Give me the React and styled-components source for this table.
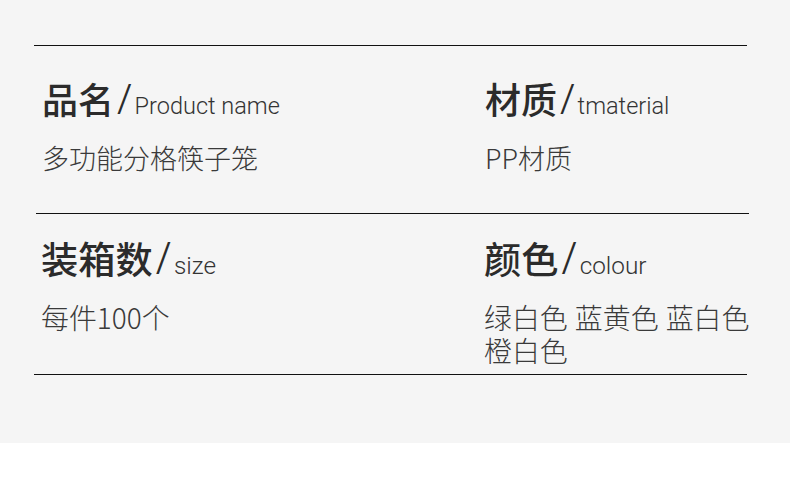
import styled, { createGlobalStyle } from "styled-components";

const GlobalStyle = createGlobalStyle`
  body {
    margin: 0;
    background: #ffffff;
    font-family: "Noto Sans CJK SC", "Noto Sans", sans-serif;
    color: #333333;
  }
`;

const SPECS = [
  {
    top: 32,
    shift: 0,
    scale: 1,
    items: [
      { cn: "品名", en: "Product name", value: [["多功能分格筷子笼"]] },
      { cn: "材质", en: "tmaterial", value: [["PP材质"]] },
    ],
  },
  {
    top: 25,
    shift: 2,
    scale: 1.035,
    items: [
      { cn: "装箱数", en: "size", value: [["每件100个"]] },
      { cn: "颜色", en: "colour", value: [["绿白色", "蓝黄色", "蓝白色"], ["橙白色"]] },
    ],
  },
];

function App() {
  return (
    <>
      <GlobalStyle />
      <Panel>
        {SPECS.map((row, i) => (
          <Section key={i} $top={row.top} $shift={row.shift}>
            {row.items.map((item) => (
              <Cell key={item.cn}>
                <Heading>
                  <Cn $scale={row.scale}>{item.cn}</Cn>
                  <Slash $scale={row.scale}>/</Slash>
                  <En $scale={row.scale}>{item.en}</En>
                </Heading>
                <Value $scale={row.scale}>
                  {item.value.map((line, j) => (
                    <Line key={j}>
                      {line.map((word) => (
                        <span key={word}>{word}</span>
                      ))}
                    </Line>
                  ))}
                </Value>
              </Cell>
            ))}
          </Section>
        ))}
      </Panel>
    </>
  );
}

export default App;

const Panel = styled.div`
  background: #f5f5f5;
  height: 443px;
  box-sizing: border-box;
  padding: 45px 0 0 34px;
`;

const Section = styled.div`
  display: grid;
  grid-template-columns: 443px 270px;
  width: 713px;
  box-sizing: border-box;
  margin-left: ${(p) => p.$shift}px;
  padding: ${(p) => p.$top}px 0 0 ${(p) => 8 - p.$shift}px;
  border-top: 1px solid #111111;
  height: 168px;

  &:last-child {
    height: 162px;
    margin-left: 0;
    padding-left: 7px;
    border-top: none;
    border-bottom: 1px solid #111111;
    position: relative;
  }

  &:last-child::before {
    content: "";
    position: absolute;
    left: 2px;
    right: -2px;
    top: 0;
    border-top: 1px solid #111111;
  }
`;

const Cell = styled.div`
  display: flex;
  flex-direction: column;
`;

const Heading = styled.div`
  display: flex;
  align-items: baseline;
  height: 40px;
  line-height: 40px;
  color: #2b2b2b;
`;

const Cn = styled.span`
  font-size: ${(p) => 36 * p.$scale}px;
  font-weight: 500;
`;

const Slash = styled.span`
  font-family: "Noto Sans", sans-serif;
  font-size: ${(p) => 42 * p.$scale}px;
  font-weight: 300;
  margin: 0 ${(p) => 3 * p.$scale}px 0 3px;
`;

const En = styled.span`
  font-family: "Roboto", sans-serif;
  font-size: ${(p) => 23.5 * p.$scale}px;
  font-weight: 300;
  color: #333333;
`;

const Value = styled.div`
  margin-top: 23px;
  font-size: ${(p) => 27 * p.$scale}px;
  line-height: 33px;
  font-weight: 300;
  color: #3a3a3a;
`;

const Line = styled.div`
  display: flex;
  gap: 7px;
`;
